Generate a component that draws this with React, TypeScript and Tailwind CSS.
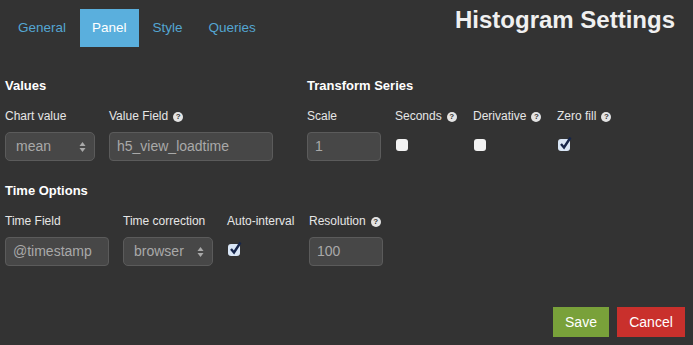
import React from 'react';

const tabs = ['General', 'Panel', 'Style', 'Queries'];

function Help() {
  return (
    <span className="ml-[5px] inline-flex h-[10px] w-[10px] items-center justify-center rounded-full bg-[#e4e4e4] text-[8px] font-bold leading-none text-[#333]">
      ?
    </span>
  );
}

function Label({ text, help }: { text: string; help?: boolean }) {
  return (
    <div className="flex h-[15px] items-center whitespace-nowrap text-[12px] leading-[15px] text-[#e6e6e6]">
      {text}
      {help && <Help />}
    </div>
  );
}

function TextInput({ value, width }: { value: string; width: string }) {
  return (
    <div
      className={`flex h-[29px] items-center rounded-[4px] border border-[#5b5b5b] bg-[#474747] pl-[7px] text-[14px] text-[#a9a9a9] ${width}`}
    >
      {value}
    </div>
  );
}

function Select({ value, width }: { value: string; width: string }) {
  return (
    <div
      className={`flex h-[29px] items-center justify-between rounded-[5px] border border-[#5b5b5b] bg-[#474747] pl-[10px] pr-[8px] text-[14px] text-[#a9a9a9] ${width}`}
    >
      <span>{value}</span>
      <svg width="7" height="12" viewBox="0 0 7 12">
        <path d="M3.5 1 L6.5 5 L0.5 5 Z" fill="#a9a9a9" />
        <path d="M3.5 11 L6.5 7 L0.5 7 Z" fill="#a9a9a9" />
      </svg>
    </div>
  );
}

function Checkbox({ checked }: { checked?: boolean }) {
  return (
    <div className="relative mt-[7px] ml-[1px] h-[12px] w-[12px]">
      <div className={`h-[12px] w-[12px] rounded-[3px] ${checked ? 'bg-[#d9e6f6]' : 'bg-[#f2f2f2]'}`} />
      {checked && (
        <svg className="absolute left-[1px] top-[-3px]" width="13" height="14" viewBox="0 0 13 14">
          <path d="M2 8 L5 11.5 L11.5 1.5" fill="none" stroke="#16254a" strokeWidth="2.4" />
        </svg>
      )}
    </div>
  );
}

function Field({ label, help, width, children }: { label: string; help?: boolean; width: string; children: React.ReactNode }) {
  return (
    <div className={`flex flex-col ${width}`}>
      <Label text={label} help={help} />
      <div className="mt-[8px] h-[29px]">{children}</div>
    </div>
  );
}

export default function App() {
  return (
    <div
      className="flex h-[345px] w-[693px] flex-col bg-[#333333]"
      style={{ fontFamily: '"Liberation Sans", Arial, sans-serif' }}
    >
      {/* Header */}
      <div className="flex h-[47px] items-start justify-between">
        <ul className="ml-[6px] mt-[9px] flex gap-[2px]">
          {tabs.map((t) => (
            <li
              key={t}
              className={`flex h-[38px] items-center px-[12px] text-[13.5px] ${
                t === 'Panel' ? 'bg-[#5aafdd] text-white' : 'text-[#54a6d2]'
              }`}
            >
              {t}
            </li>
          ))}
        </ul>
        <h1 className="mr-[18px] mt-[6px] text-[24px] font-bold leading-[28px] text-[#f0f0f0]">
          Histogram Settings
        </h1>
      </div>

      {/* Values / Transform Series */}
      <div className="mt-[31px] flex pl-[5px]">
        <div className="w-[302px]">
          <h4 className="text-[13px] font-bold leading-[16px] text-white">Values</h4>
          <div className="mt-[15px] flex gap-[14px]">
            <Field label="Chart value" width="w-[90px]">
              <Select value="mean" width="w-[90px]" />
            </Field>
            <Field label="Value Field" help width="w-[164px]">
              <TextInput value="h5_view_loadtime" width="w-[164px]" />
            </Field>
          </div>
        </div>
        <div>
          <h4 className="text-[13px] font-bold leading-[16px] text-white">Transform Series</h4>
          <div className="mt-[15px] flex">
            <Field label="Scale" width="w-[88px]">
              <TextInput value="1" width="w-[74px]" />
            </Field>
            <Field label="Seconds" help width="w-[78px]">
              <Checkbox />
            </Field>
            <Field label="Derivative" help width="w-[84px]">
              <Checkbox />
            </Field>
            <Field label="Zero fill" help width="w-[70px]">
              <Checkbox checked />
            </Field>
          </div>
        </div>
      </div>

      {/* Time Options */}
      <div className="mt-[22px] pl-[5px]">
        <h4 className="text-[13px] font-bold leading-[16px] text-white">Time Options</h4>
        <div className="mt-[15px] flex">
          <Field label="Time Field" width="w-[118px]">
            <TextInput value="@timestamp" width="w-[104px]" />
          </Field>
          <Field label="Time correction" width="w-[104px]">
            <Select value="browser" width="w-[90px]" />
          </Field>
          <Field label="Auto-interval" width="w-[82px]">
            <Checkbox checked />
          </Field>
          <Field label="Resolution" help width="w-[74px]">
            <TextInput value="100" width="w-[74px]" />
          </Field>
        </div>
      </div>

      {/* Footer */}
      <div className="mt-auto mb-[8px] mr-[8px] flex justify-end gap-[8px]">
        <button className="h-[30px] w-[56px] bg-[#79a13a] text-[14px] text-white">Save</button>
        <button className="h-[30px] w-[68px] bg-[#c9302c] text-[14px] text-white">Cancel</button>
      </div>
    </div>
  );
}
